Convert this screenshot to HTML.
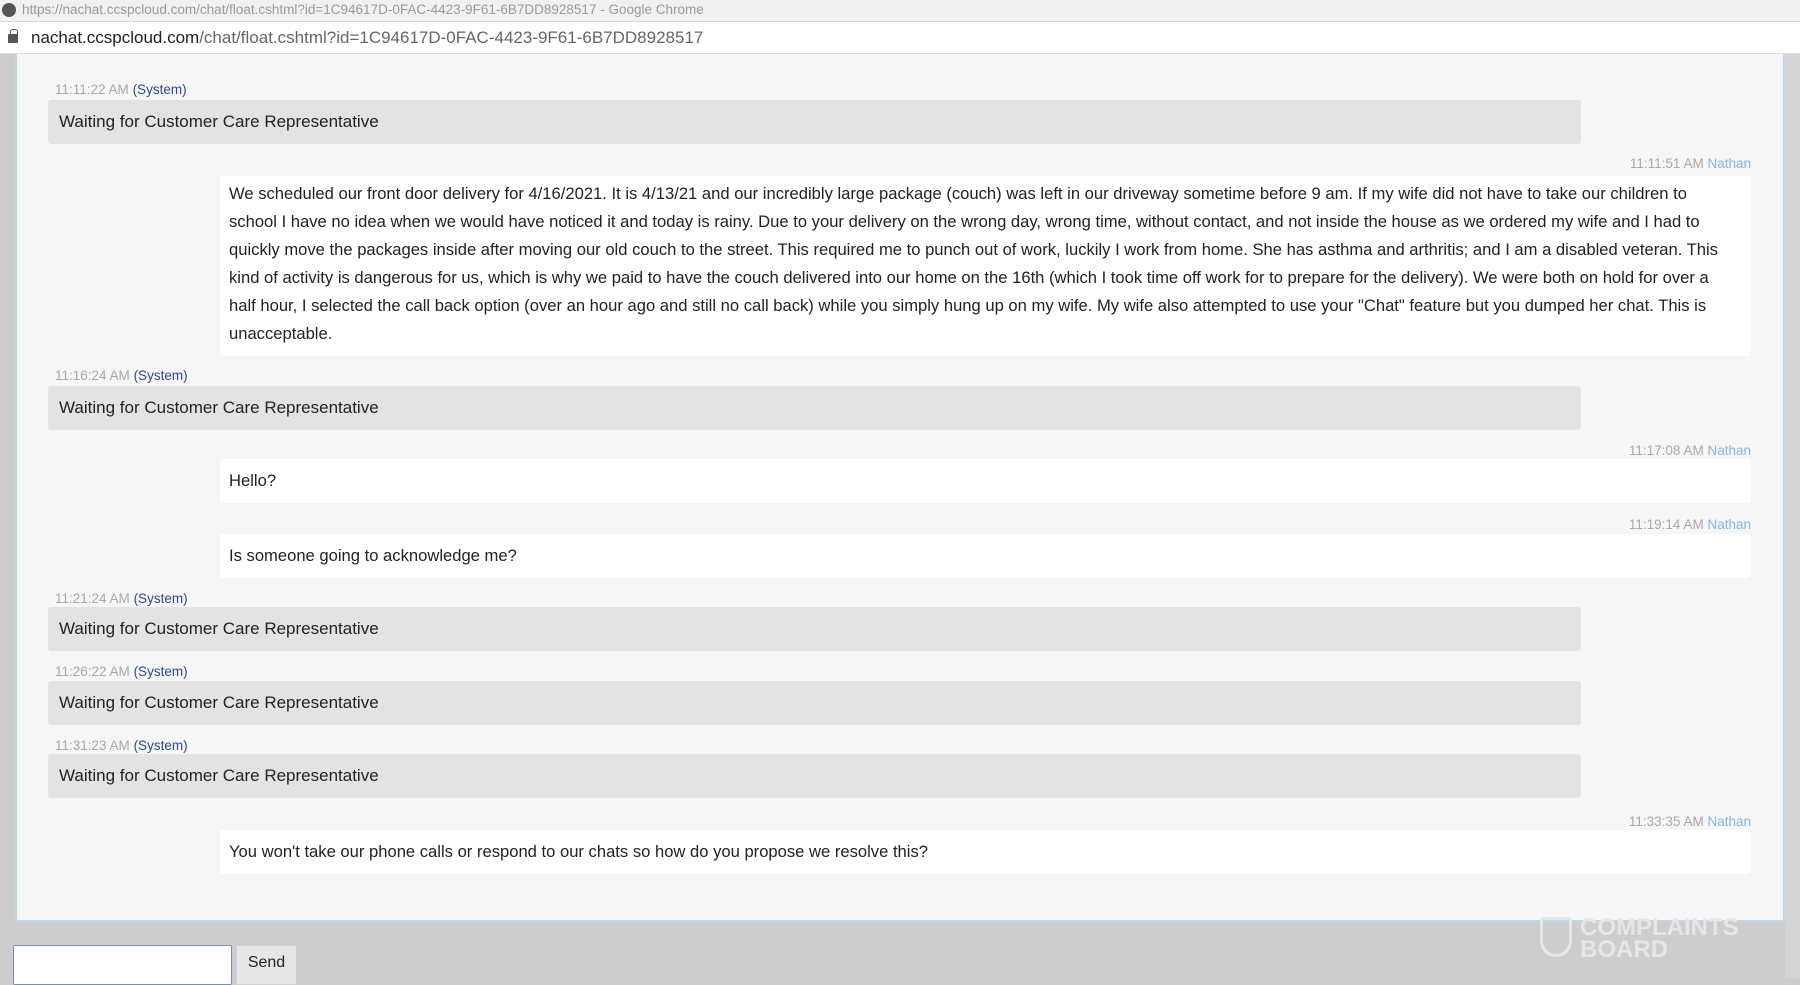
<!DOCTYPE html>
<html><head><meta charset="utf-8"><style>
*{margin:0;padding:0;box-sizing:border-box}
body{width:1800px;height:978px;overflow:hidden;background:#cdcdcd;font-family:"Liberation Sans",sans-serif;position:relative}
.title{position:absolute;left:0;top:0;width:1800px;height:22px;background:#f1f1f1;color:#9a9a9a;font-size:13.5px;line-height:20px;padding-left:22px;border-bottom:1px solid #d8d8d8}
.title .g{position:absolute;left:2px;top:3px;width:14px;height:14px;border-radius:50%;background:#555}
.addr{position:absolute;left:0;top:22px;width:1800px;height:32px;background:#fff;font-size:17px;line-height:32px;padding-left:31px;color:#222;border-bottom:1px solid #ddd}
.addr span{color:#666}
.lock{position:absolute;left:8px;top:12px;width:10px;height:9px;background:#555;border-radius:1px}
.lock:before{content:"";position:absolute;left:2px;top:-5px;width:6px;height:6px;border:1.5px solid #555;border-bottom:none;border-radius:3px 3px 0 0}
.panel{position:absolute;left:15px;top:54px;width:1770px;height:868px;background:#f6f6f6;border:2px solid #bcd7e6;border-top:none}
.scroll{position:absolute;left:1785px;top:54px;width:15px;height:924px;background:#d4d4d4}
.ts{position:absolute;font-size:13.5px;color:#a8a8a8;white-space:nowrap}
.sys{color:#2b4a8c}
.nat{color:#86b6e2}
.sb{position:absolute;left:48px;width:1533px;height:44px;background:#e3e3e3;border-radius:3px;font-size:17px;line-height:44px;padding-left:11px;color:#222}
.ub{position:absolute;left:220px;width:1531px;background:#fff;border-radius:3px;font-size:16.6px;line-height:27.9px;padding:0 9px;color:#222;white-space:nowrap}
.ta{position:absolute;left:13px;top:945px;width:219px;height:40px;background:#fff;border:1px solid #7a8fb0;border-radius:2px}
.send{position:absolute;left:236px;top:945px;width:61px;height:40px;background:#e6e6e6;border:1px solid #d0d0d0;font-size:16px;line-height:34px;text-align:center;color:#222}
.logo{position:absolute;left:1580px;top:917px;color:#e6e6e6;font-size:24px;font-weight:bold;line-height:22px;letter-spacing:0}
.shield{position:absolute;left:1540px;top:917px;width:32px;height:40px;border:3px solid #e6e6e6;border-radius:4px 4px 16px 16px}
</style></head><body>
<div class="title"><div class="g"></div>https://nachat.ccspcloud.com/chat/float.cshtml?id=1C94617D-0FAC-4423-9F61-6B7DD8928517 - Google Chrome</div>
<div class="addr"><div class="lock"></div>nachat.ccspcloud.com<span>/chat/float.cshtml?id=1C94617D-0FAC-4423-9F61-6B7DD8928517</span></div>
<div class="panel"></div>
<div class="scroll"></div>

<div class="ts" style="left:55px;top:82px">11:11:22 AM <span class="sys">(System)</span></div>
<div class="sb" style="top:100px">Waiting for Customer Care Representative</div>

<div class="ts" style="right:49px;top:156px">11:11:51 AM <span class="nat">Nathan</span></div>
<div class="ub" style="top:176px;height:180px;padding-top:4px">We scheduled our front door delivery for 4/16/2021. It is 4/13/21 and our incredibly large package (couch) was left in our driveway sometime before 9 am. If my wife did not have to take our children to<br>school I have no idea when we would have noticed it and today is rainy. Due to your delivery on the wrong day, wrong time, without contact, and not inside the house as we ordered my wife and I had to<br>quickly move the packages inside after moving our old couch to the street. This required me to punch out of work, luckily I work from home. She has asthma and arthritis; and I am a disabled veteran. This<br>kind of activity is dangerous for us, which is why we paid to have the couch delivered into our home on the 16th (which I took time off work for to prepare for the delivery). We were both on hold for over a<br>half hour, I selected the call back option (over an hour ago and still no call back) while you simply hung up on my wife. My wife also attempted to use your "Chat" feature but you dumped her chat. This is<br>unacceptable.</div>

<div class="ts" style="left:55px;top:368px">11:16:24 AM <span class="sys">(System)</span></div>
<div class="sb" style="top:386px">Waiting for Customer Care Representative</div>

<div class="ts" style="right:49px;top:443px">11:17:08 AM <span class="nat">Nathan</span></div>
<div class="ub" style="top:459px;height:44px;line-height:44px">Hello?</div>

<div class="ts" style="right:49px;top:517px">11:19:14 AM <span class="nat">Nathan</span></div>
<div class="ub" style="top:534px;height:44px;line-height:44px">Is someone going to acknowledge me?</div>

<div class="ts" style="left:55px;top:591px">11:21:24 AM <span class="sys">(System)</span></div>
<div class="sb" style="top:607px">Waiting for Customer Care Representative</div>

<div class="ts" style="left:55px;top:664px">11:26:22 AM <span class="sys">(System)</span></div>
<div class="sb" style="top:681px">Waiting for Customer Care Representative</div>

<div class="ts" style="left:55px;top:738px">11:31:23 AM <span class="sys">(System)</span></div>
<div class="sb" style="top:754px">Waiting for Customer Care Representative</div>

<div class="ts" style="right:49px;top:814px">11:33:35 AM <span class="nat">Nathan</span></div>
<div class="ub" style="top:830px;height:44px;line-height:44px">You won't take our phone calls or respond to our chats so how do you propose we resolve this?</div>

<div class="ta"></div>
<div class="send">Send</div>
<div class="shield"></div>
<div class="logo">COMPLAINTS<br>BOARD</div>
</body></html>
